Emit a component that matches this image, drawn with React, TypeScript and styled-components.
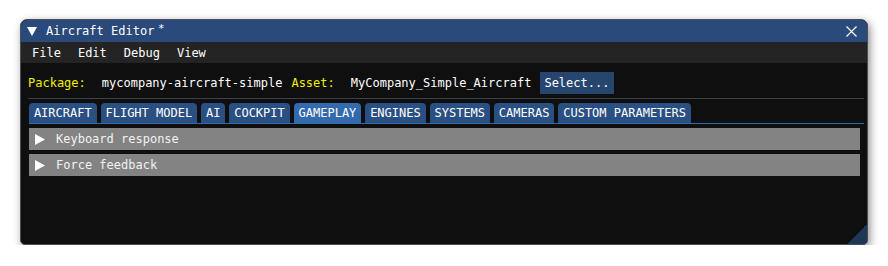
import * as React from 'react';
import styled, { createGlobalStyle } from 'styled-components';

const GlobalStyle = createGlobalStyle`
  html, body {
    margin: 0;
    padding: 0;
    background: #ffffff;
  }
  body {
    font-family: "DejaVu Sans Mono", "Liberation Mono", monospace;
    font-size: 12px;
    color: #ffffff;
  }
`;

const Window = styled.div`
  position: relative;
  box-sizing: border-box;
  margin: 19px 0 0 20px;
  width: 848px;
  height: 226px;
  display: flex;
  flex-direction: column;
  background: #0f0f0f;
  border: 1px solid #4e4e58;
  border-radius: 7px 7px 5px 5px;
  box-shadow: 2px 3px 8px rgba(0, 0, 0, 0.45);
  overflow: hidden;
`;

const TitleBar = styled.div`
  height: 22px;
  display: flex;
  align-items: center;
  padding: 0 6px;
  background: #294a7a;
  flex-shrink: 0;
`;

const TitleText = styled.span`
  margin-left: 9px;
  line-height: 14px;
`;

const Modified = styled.span`
  align-self: flex-start;
  margin: 3px 0 0 4px;
  font-family: "DejaVu Sans", sans-serif;
  font-size: 11px;
  line-height: 11px;
`;

const CloseButton = styled.div`
  margin-left: auto;
  margin-right: 4px;
  width: 11px;
  height: 11px;
  display: flex;
`;

const MenuBar = styled.div`
  height: 21px;
  display: flex;
  align-items: center;
  gap: 17px;
  padding-left: 11px;
  background: #242424;
  flex-shrink: 0;
`;

const Content = styled.div`
  display: flex;
  flex-direction: column;
  padding: 9px 7px 0 7px;
`;

const AssetRow = styled.div`
  height: 22px;
  display: flex;
  align-items: center;
`;

const Label = styled.span`
  color: #f0f000;
  margin-right: 16px;
`;

const Value = styled.span`
  margin-right: 9px;
`;

const SelectButton = styled.div`
  height: 22px;
  display: flex;
  align-items: center;
  padding: 0 5px 0 4px;
  background: #26466f;
`;

const Separator = styled.div`
  height: 1px;
  margin: 4px -4px 0 0;
  background: #3f3f47;
`;

const TabBar = styled.div`
  display: flex;
  gap: 4px;
  margin: 4px -4px 0 1px;
  height: 20px;
  border-bottom: 1px solid #3369ad;
`;

const Tab = styled.div<{ $active?: boolean }>`
  height: 20px;
  display: flex;
  align-items: center;
  padding: 0 4.9px;
  border-radius: 4px 4px 0 0;
  background: ${p => (p.$active ? '#3369ad' : '#2a4f82')};
`;

const Sections = styled.div`
  display: flex;
  flex-direction: column;
  gap: 4px;
  margin: 4px 0 0 1px;
`;

const Header = styled.div`
  height: 22px;
  display: flex;
  align-items: center;
  padding-left: 6px;
  background: #838383;
  color: #f2f2f2;
`;

const HeaderLabel = styled.span`
  margin-left: 11px;
`;

const ResizeGrip = styled.div`
  position: absolute;
  right: 0;
  bottom: 0;
  width: 20px;
  height: 20px;
  background: linear-gradient(135deg, transparent 50%, #1f3756 50%);
`;

const tabs = [
  'AIRCRAFT',
  'FLIGHT MODEL',
  'AI',
  'COCKPIT',
  'GAMEPLAY',
  'ENGINES',
  'SYSTEMS',
  'CAMERAS',
  'CUSTOM PARAMETERS',
];

const DownArrow = () => (
  <svg width="10" height="9" viewBox="0 0 10 9">
    <polygon points="0,0 10,0 5,9" fill="#ffffff" />
  </svg>
);

const RightArrow = () => (
  <svg width="10" height="11" viewBox="0 0 10 11">
    <polygon points="0,0 10,5.5 0,11" fill="#ffffff" />
  </svg>
);

const CloseIcon = () => (
  <svg width="11" height="11" viewBox="0 0 11 11">
    <path d="M0.5 0.5 L10.5 10.5 M10.5 0.5 L0.5 10.5" stroke="#ffffff" strokeWidth="1.2" />
  </svg>
);

export default function App() {
  return (
    <>
      <GlobalStyle />
      <Window>
        <TitleBar>
          <DownArrow />
          <TitleText>Aircraft Editor</TitleText>
          <Modified>*</Modified>
          <CloseButton>
            <CloseIcon />
          </CloseButton>
        </TitleBar>
        <MenuBar>
          <span>File</span>
          <span>Edit</span>
          <span>Debug</span>
          <span>View</span>
        </MenuBar>
        <Content>
          <AssetRow>
            <Label>Package:</Label>
            <Value>mycompany-aircraft-simple</Value>
            <Label>Asset:</Label>
            <Value>MyCompany_Simple_Aircraft</Value>
            <SelectButton>Select...</SelectButton>
          </AssetRow>
          <Separator />
          <TabBar>
            {tabs.map(t => (
              <Tab key={t} $active={t === 'GAMEPLAY'}>
                {t}
              </Tab>
            ))}
          </TabBar>
          <Sections>
            <Header>
              <RightArrow />
              <HeaderLabel>Keyboard response</HeaderLabel>
            </Header>
            <Header>
              <RightArrow />
              <HeaderLabel>Force feedback</HeaderLabel>
            </Header>
          </Sections>
        </Content>
        <ResizeGrip />
      </Window>
    </>
  );
}
